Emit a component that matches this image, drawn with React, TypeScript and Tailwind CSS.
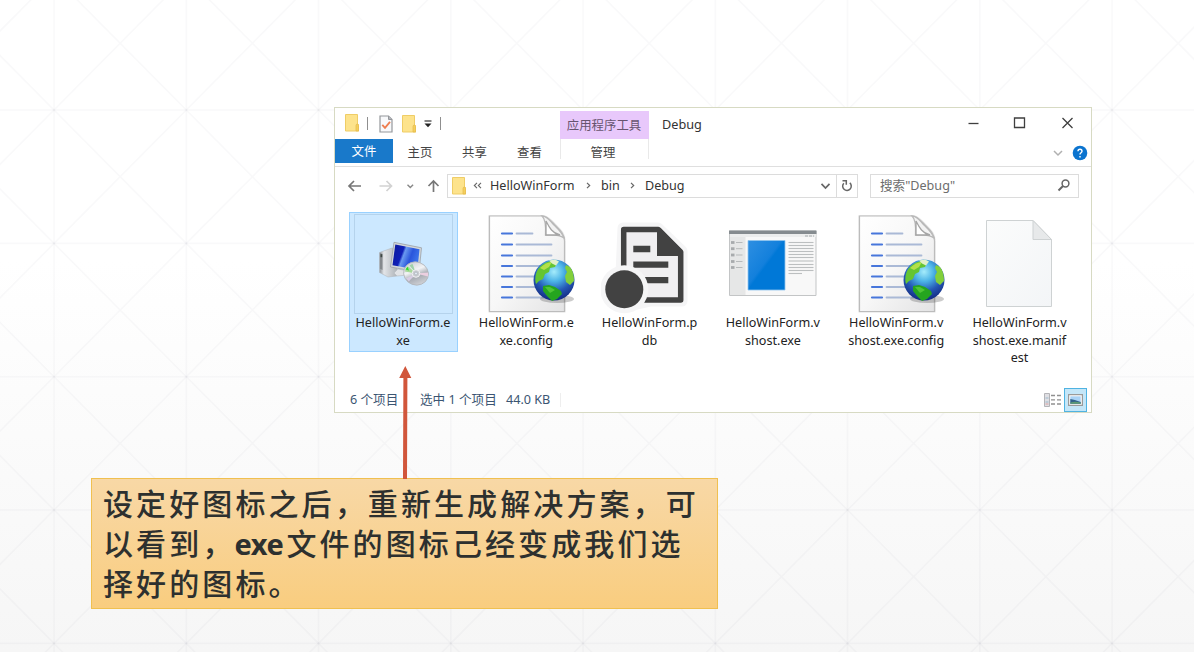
import React from "react";

const V_LINES = [-78.3, 54, 186.3, 318.5, 450.8, 583, 715.3, 847.5, 979.8, 1112, 1244.3];
const H_LINES = [-23.5, 110, 243.4, 376.7, 510, 643.4, 776.7];

function Backdrop() {
  return (
    <svg className="absolute inset-0" width="1194" height="652" viewBox="0 0 1194 652" fill="none" stroke="#6b7280" strokeOpacity="0.045" strokeWidth="1.6">
      {V_LINES.map((x) => (
        <path key={"v" + x} d={`M${x} 0V652`} />
      ))}
      {H_LINES.map((y) => (
        <path key={"h" + y} d={`M0 ${y}H1194`} />
      ))}
      {V_LINES.slice(0, -1).map((x, i) =>
        H_LINES.slice(0, -1).map((y, j) => (
          <path key={i + "-" + j} d={`M${x} ${y}L${V_LINES[i + 1]} ${H_LINES[j + 1]}M${V_LINES[i + 1]} ${y}L${x} ${H_LINES[j + 1]}`} />
        )),
      )}
    </svg>
  );
}

function Folder() {
  return (
    <svg className="shrink-0" width="14" height="18" viewBox="0 0 14 18">
      <path d="M.5.5h12v9.5l1.200 1.200V17H.5z" fill="#fde38c" stroke="#efcd66" />
      <path d="M11 17V11.500q0-1.400 1.300-1.400t1.300 1.400V17z" fill="#f5cf5c" stroke="#e4b94a" strokeWidth=".7" />
    </svg>
  );
}

function CheckDoc() {
  return (
    <svg className="shrink-0" width="14" height="18" viewBox="0 0 14 18" fill="none">
      <path d="M1 1h8.500l3.500 3.500V17H1z" fill="#f8f9fb" stroke="#94979b" strokeWidth="1.200" />
      <path d="M9.500 1v3.500H13" fill="#b5b8bc" stroke="#94979b" />
      <path d="M3.300 9.800l2.700 3 5-6" stroke="#ee7d4f" strokeWidth="1.800" />
    </svg>
  );
}

function ComputerIcon() {
  return (
    <svg width="52" height="48" viewBox="0 0 52 48">
      <defs>
        <linearGradient id="scr" x1="0" y1="0" x2="1" y2=".35">
          <stop offset="0" stopColor="#0c1a9a" />
          <stop offset=".42" stopColor="#1020b8" />
          <stop offset=".5" stopColor="#6a9af0" />
          <stop offset=".75" stopColor="#2a55dc" />
          <stop offset="1" stopColor="#3b72ea" />
        </linearGradient>
        <linearGradient id="tower" x1="0" y1="0" x2="1" y2="0">
          <stop offset="0" stopColor="#8d9298" />
          <stop offset=".25" stopColor="#e3e5e8" />
          <stop offset="1" stopColor="#aeb3b8" />
        </linearGradient>
        <linearGradient id="disc" x1="0" y1="0" x2="1" y2="1">
          <stop offset="0" stopColor="#bfc3c8" />
          <stop offset=".4" stopColor="#f2f3f5" />
          <stop offset=".6" stopColor="#a9adb4" />
          <stop offset="1" stopColor="#e6e7ea" />
        </linearGradient>
      </defs>
      <path d="M1.500 12.500L14 8l5 4v24l-9 1-8.500-4.500z" fill="url(#tower)" stroke="#b3b8be" strokeWidth=".6" />
      <path d="M1.900 13l2.600 1v16l-2.600-1.200z" fill="#85898d" />
      <path d="M2.500 14.200h1.700v3H2.500z" fill="#3d4742" />
      <path d="M20 29l10 2v4l-11 1-3-3z" fill="#e1e3e6" stroke="#b4b8bd" strokeWidth=".6" />
      <path d="M16 2.300L43.500 7.800 41 32 12.500 27z" fill="#d3d7da" stroke="#9aa0a6" strokeWidth=".8" />
      <path d="M17.300 4.400L41.500 9.300 39.400 29.800 14.500 25.300z" fill="url(#scr)" />
      <ellipse cx="38" cy="33.500" rx="12.500" ry="11.500" transform="rotate(20 38 33.500)" fill="url(#disc)" stroke="#b1b5ba" strokeWidth=".8" />
      <path d="M38 33.500L26.800 31.500a11 10 0 013.500-5z" fill="#a7d99a" />
      <path d="M38 33.500l-6.500-8 3-1.800z" fill="#9fd2a8" />
      <path d="M31 30.500l-3.500-1 2-3z" fill="#2fe02a" />
      <path d="M38 33.500l12-1v4z" fill="#eccfe0" />
      <path d="M38 33.500l-9.800 5 2.600 3z" fill="#d8cde4" />
      <circle cx="38" cy="33.500" r="3.800" fill="#c9ccd1" stroke="#f1f1f3" />
      <circle cx="38" cy="33.500" r="1.500" fill="#e2eaf2" stroke="#a5a9b0" strokeWidth=".6" />
    </svg>
  );
}

const CONFIG_ROWS = [17.5, 28.5, 39.5, 50, 60.5, 71, 81.5];

function ConfigIcon({ id }: { id: string }) {
  const page = id + "-page";
  const ocean = id + "-ocean";
  return (
    <svg className="mt-px" width="98" height="100" viewBox="0 0 98 100">
      <defs>
        <linearGradient id={page} x1="0" y1="0" x2="1" y2="1">
          <stop offset="0" stopColor="#ffffff" />
          <stop offset=".5" stopColor="#f7f7f7" />
          <stop offset="1" stopColor="#e3e3e4" />
        </linearGradient>
        <radialGradient id={ocean} cx=".5" cy=".3" r=".68">
          <stop offset="0" stopColor="#a5ecfb" />
          <stop offset=".35" stopColor="#4bb3e6" />
          <stop offset=".7" stopColor="#2456b4" />
          <stop offset="1" stopColor="#142f86" />
        </radialGradient>
      </defs>
      <path d="M11.500 1H64C70 1 74 7 78 11s8.500 8 8.500 15V96.500H11.500z" fill="none" stroke="#dcdcdc" strokeWidth="2.600" strokeLinejoin="round" strokeOpacity=".6" />
      <path d="M11.500 1H64C70 1 74 7 78 11s8.500 8 8.500 15V96.500H11.500z" fill={`url(#${page})`} stroke="#bcbcbc" strokeWidth="1.200" strokeLinejoin="round" />
      <path d="M64 1c3.500 3 4 10 3.500 19 8-.5 14-.5 18.500 3C84 17 80 14 76 10S70 1 64 1z" fill="#f3f3f3" stroke="#b9b9b9" strokeWidth="1.300" />
      <path d="M68 6v14h14c-4-1-6-2-8.500-5S69.500 9 68 6z" fill="#fff" stroke="#a5a5a5" strokeWidth="1.300" />
      {CONFIG_ROWS.map((y, i) => (
        <g key={y} strokeLinecap="round" strokeWidth="2.200">
          <path d={`M24 ${y + 1}h10`} stroke="#4776db" />
          <path d={`M38.500 ${y + 1}h${i === 0 ? 16 : 35}`} stroke="#aab9d6" strokeWidth="1.800" />
        </g>
      ))}
      <ellipse cx="79" cy="84" rx="17" ry="4" fill="#333" fillOpacity=".25" />
      <circle cx="76" cy="65" r="20.500" fill={`url(#${ocean})`} />
      <path d="M58 59c2-8 9-12 16-13l5 2-2 4-5 1-1 4-4 2-2 5-4 2-3 3c-1-3-1-6 0-10z" fill="#65c532" />
      <path d="M62 53c4-4 8-6 12-6l-3 5-5 3z" fill="#b4e04a" />
      <path d="M71 45.500l6-1 4 2-3 4-4-2z" fill="#e3f0c8" />
      <path d="M88 50l4 2c3 4 4 8 4 14l-4 4-4-3-1-6 2-4-2-4z" fill="#82cf3a" />
      <path d="M65 71l6-1 6 2 6 4 1 3-5 5-5 2-5-5-4-5z" fill="#25a51f" />
      <path d="M67 72l5 0 5 3-5 3z" fill="#4fc436" />
    </svg>
  );
}

function PdbIcon() {
  return (
    <svg width="98" height="100" viewBox="0 0 98 100">
      <path d="M22 14h35L81 37v50H50L23 93 20 60z" fill="#f5f5f6" stroke="#f5f5f6" strokeWidth="11" strokeLinejoin="round" />
      <path d="M22.700 15.500h34.500L79.700 38v48H22.700z" fill="#f0eff1" stroke="#424242" strokeWidth="5.500" strokeLinejoin="round" />
      <path d="M56 14h3.500L81 36v6H56z" fill="#424242" />
      <path d="M32.300 31.700h17v6.600h-17zM32.300 47.500h35v6.300h-35zM32.300 63h35v6.300h-35z" fill="#424242" />
      <circle cx="23.300" cy="75.300" r="24" fill="#f5f5f6" />
      <circle cx="23.300" cy="75.300" r="19" fill="#424242" />
    </svg>
  );
}

function AppIcon() {
  return (
    <svg width="98" height="100" viewBox="0 0 98 100">
      <defs>
        <linearGradient id="pane" x1="0" y1="0" x2="1" y2="1">
          <stop offset="0" stopColor="#2e8fe2" />
          <stop offset=".45" stopColor="#1380dc" />
          <stop offset=".5" stopColor="#0078d7" />
          <stop offset="1" stopColor="#0078d7" />
        </linearGradient>
      </defs>
      <path d="M5.500 17h86.500v64.500H5.500z" fill="#f8f8f8" stroke="#c3c5c6" />
      <path d="M6 23h15.500v58H6z" fill="#e6e7e7" />
      <path d="M5 16.500h87.500V20H5z" fill="#858b8f" />
      <path d="M6 20h86v3H6z" fill="#eceded" />
      <path d="M81 22h9" stroke="#c9cccd" strokeWidth="2" strokeDasharray="3 1" />
      <path d="M24 26.500h37v49.500H24z" fill="url(#pane)" stroke="#8fc4ee" strokeWidth=".8" />
      {[28.5, 34.7, 41, 47.5, 53.5].map((y) => (
        <g key={y}>
          <path d={`M7 ${y}h3.500`} stroke="#a8abad" strokeWidth="2.800" />
          <path d={`M12 ${y}h6.500`} stroke="#b7babb" strokeWidth="1" />
        </g>
      ))}
      {[28.5, 31.5, 34.5, 37.5, 40.5, 43.5, 47, 50.5, 53.5, 56.5].map((y) => (
        <path key={y} d={`M64.500 ${y}h25`} stroke="#bcbfc0" strokeWidth="1.100" />
      ))}
      <path d="M64.500 59.500h13.500" stroke="#bcbfc0" strokeWidth="1.100" />
    </svg>
  );
}

function BlankIcon() {
  return (
    <svg width="98" height="100" viewBox="0 0 98 100">
      <defs>
        <linearGradient id="blank" x1="0" y1="0" x2="1" y2="1">
          <stop offset="0" stopColor="#fbfcfc" />
          <stop offset="1" stopColor="#f3f5f7" />
        </linearGradient>
      </defs>
      <path d="M15.500 6.500h46.500L80.500 25.500v67H15.500z" fill="url(#blank)" stroke="#ced2d3" />
      <path d="M62 6.500v19h18.500z" fill="#e7e9ea" stroke="#ced2d3" />
    </svg>
  );
}

const FILES = [
  { lines: ["HelloWinForm.e", "xe"], icon: <ComputerIcon />, selected: true },
  { lines: ["HelloWinForm.e", "xe.config"], icon: <ConfigIcon id="a" />, selected: false },
  { lines: ["HelloWinForm.p", "db"], icon: <PdbIcon />, selected: false },
  { lines: ["HelloWinForm.v", "shost.exe"], icon: <AppIcon />, selected: false },
  { lines: ["HelloWinForm.v", "shost.exe.config"], icon: <ConfigIcon id="b" />, selected: false },
  { lines: ["HelloWinForm.v", "shost.exe.manif", "est"], icon: <BlankIcon />, selected: false },
];

function TitleBar() {
  return (
    <div className="flex h-[31px] items-start">
      <div className="flex h-[30px] w-[225px] items-center pl-[10px]">
        <Folder />
        <div className="ml-[8px] h-[13px] w-px bg-[#8f8f8f]" />
        <div className="ml-[11px] flex pt-px">
          <CheckDoc />
        </div>
        <div className="ml-[9px] flex pt-px">
          <Folder />
        </div>
        <svg className="mt-[2px] ml-[8px]" width="8" height="8" viewBox="0 0 8 8">
          <path d="M.5 1h7" stroke="#333" strokeWidth="1.200" />
          <path d="M.5 3.500h7L4 7.300z" fill="#222" />
        </svg>
        <div className="ml-[8px] h-[13px] w-px bg-[#8f8f8f]" />
      </div>
      <div className="mt-[3px] flex h-[28px] w-[89px] items-center justify-center bg-[#e8c8fb] pt-[2px] pr-px text-[#66546f]">应用程序工具</div>
      <div className="ml-[13px] flex h-[31px] items-center text-[12.7px] text-[#333]">Debug</div>
      <svg className="mt-[7px] ml-auto mr-[16px]" width="108" height="16" viewBox="0 0 108 16" fill="none" stroke="#3f3f3f" strokeWidth="1.300">
        <path d="M1.500 8.500h10" />
        <path d="M47.500 3h10v9.500h-10z" />
        <path d="M95.500 3l10 10M105.500 3l-10 10" />
      </svg>
    </div>
  );
}

function Ribbon() {
  return (
    <div className="flex h-[28px] items-start border-b border-[#dfdfdf] text-[#444]">
      <div className="flex h-[24px] w-[58px] items-center justify-center bg-[#1979ca] pt-[2px] text-white">文件</div>
      <div className="flex h-[27px] w-[54px] items-center justify-center">主页</div>
      <div className="flex h-[27px] w-[55px] items-center justify-center">共享</div>
      <div className="flex h-[27px] w-[55px] items-center justify-center">查看</div>
      <div className="ml-[3px] flex h-[20px] w-[89px] items-center justify-center border-x border-[#e9e9e9] pt-[7px] pr-[3px]">管理</div>
      <svg className="mt-[6px] ml-auto mr-[3px]" width="36" height="16" viewBox="0 0 36 16" fill="none">
        <path d="M2 6l4 4 4-4" stroke="#b0b0b0" strokeWidth="1.500" />
        <circle cx="28" cy="8" r="7.300" fill="#0b74cf" />
        <path d="M26 6.300a2 2 0 114 0c0 1.500-2 1.500-2 3.200M28 11v1.500" stroke="#fff" strokeWidth="1.400" />
      </svg>
    </div>
  );
}

function Chevron() {
  return (
    <svg width="5" height="7" viewBox="0 0 5 7" fill="none">
      <path d="M1 .8l2.700 2.700L1 6.200" stroke="#666" strokeWidth="1.200" />
    </svg>
  );
}

function AddressRow() {
  return (
    <div className="flex h-[38px] items-center pb-px text-[12.600px] text-[#333]">
      <svg className="shrink-0" width="112" height="16" viewBox="0 0 112 16" fill="none" strokeWidth="1.700">
        <path d="M26 8H14M19 3L14 8l5 5" stroke="#777" />
        <path d="M44.500 8H56.500M51.500 3l5 5-5 5" stroke="#d2d2d2" />
        <path d="M72.500 6.800l2.800 2.800 2.800-2.800" stroke="#888" strokeWidth="1.400" />
        <path d="M98.500 14V3M93.500 8l5-5 5 5" stroke="#777" />
      </svg>
      <div className="flex h-[24px] w-[411px] shrink-0 items-center border border-[#dcdcdc] pl-[4px]">
        <Folder />
        <svg className="ml-[7px]" width="9" height="7" viewBox="0 0 9 7" fill="none" stroke="#666" strokeWidth="1.100">
          <path d="M4 .8L1.300 3.500 4 6.200M8 .8L5.300 3.500 8 6.200" />
        </svg>
        <span className="ml-[8px] w-[85px] whitespace-nowrap">HelloWinForm</span>
        <div className="ml-[11px] flex">
          <Chevron />
        </div>
        <span className="ml-[10px] w-[19px]">bin</span>
        <div className="ml-[10px] flex">
          <Chevron />
        </div>
        <span className="ml-[10px]">Debug</span>
        <svg className="ml-auto mr-[5px]" width="11" height="8" viewBox="0 0 11 8" fill="none">
          <path d="M1.500 1.800L5.500 6l4-4.200" stroke="#666" strokeWidth="1.700" />
        </svg>
        <div className="flex h-[22px] w-[21px] items-center justify-center border-l border-[#dcdcdc]">
          <svg width="12" height="13" viewBox="0 0 12 13" fill="none" stroke="#666" strokeWidth="1.500">
            <path d="M8.800 3.900A4.300 4.300 0 112.800 4.200" />
            <path d="M1.500 1.800h3.800v4" />
          </svg>
        </div>
      </div>
      <div className="ml-[12px] flex h-[24px] w-[209px] shrink-0 items-center border border-[#dcdcdc] pr-[7px] pl-[9px] text-[#6d6d6d]">
        <span>搜索"Debug"</span>
        <svg className="ml-auto" width="14" height="13" viewBox="0 0 14 13" fill="none" stroke="#666" strokeWidth="1.500">
          <circle cx="8.500" cy="4.500" r="3.400" />
          <path d="M6 7L1.500 11.500" strokeWidth="1.900" />
        </svg>
      </div>
    </div>
  );
}

function FileGrid() {
  return (
    <div className="flex h-[183px] gap-[14.300px] pt-[7px] pl-[14px]">
      {FILES.map((f, i) => (
        <div
          key={i}
          className={
            f.selected
              ? "flex h-[140px] w-[109px] shrink-0 flex-col items-center border border-[#99d1ff] bg-[#cce8ff]"
              : "flex h-[140px] w-[109px] shrink-0 flex-col items-center border border-transparent"
          }
        >
          <div
            className={
              f.selected
                ? "mt-px flex h-[100px] w-[99px] items-center justify-center border border-[#b5d3ec]"
                : "mt-px flex h-[100px] w-[99px] items-center justify-center"
            }
          >
            {f.icon}
          </div>
          <div className="pr-px text-center text-[12.600px] leading-[17.700px] whitespace-nowrap text-[#222]">
            {f.lines.map((l) => (
              <div key={l}>{l}</div>
            ))}
          </div>
        </div>
      ))}
    </div>
  );
}

function StatusBar() {
  return (
    <div className="flex h-[24px] items-center pl-[15px] text-[12.600px] text-[#3b5572]">
      <span className="w-[70px] whitespace-nowrap">6 个项目</span>
      <span className="w-[86px] whitespace-nowrap">选中 1 个项目</span>
      <span className="whitespace-nowrap">44.0 KB</span>
      <div className="ml-[10px] h-[14px] w-px bg-[#eeeeee]" />
      <svg className="ml-auto" width="20" height="16" viewBox="0 0 20 16">
        <path d="M1.500 1.500h5v13h-5z" fill="#dfdfe3" stroke="#b4b4b8" />
        <path d="M2.500 6h3M2.500 10h3" stroke="#9bb8cc" />
        <path d="M2.500 12h3" stroke="#d9a0a0" />
        <path d="M8 3.500h4M14 3.500h4M8 7.800h4M14 7.800h4M8 12h4M14 12h4" stroke="#909090" strokeWidth="1.300" />
      </svg>
      <div className="ml-px mr-[4px] flex h-[24px] w-[23px] items-center justify-center border border-[#4fb3e2] bg-[#c4e6f8]">
        <svg width="15" height="12" viewBox="0 0 15 12">
          <path d="M.6.6h13.800v10.800H.6z" fill="#fff" stroke="#9a9a9a" strokeWidth="1.200" />
          <path d="M2.300 2.300h10.400v7.400H2.300z" fill="#a9d2f5" />
          <path d="M2.300 5q4 .5 10.400 3v1.700H2.300z" fill="#33628b" />
          <path d="M2.300 8.500q5-1.500 10.400 0v1.200H2.300z" fill="#5c9a72" />
        </svg>
      </div>
    </div>
  );
}

export default function App() {
  return (
    <main className="relative h-[652px] w-[1194px] overflow-hidden bg-linear-to-b from-white from-40% to-[#f6f6f6] pt-[107px] [font-family:'Noto_Sans','Noto_Sans_CJK_SC',sans-serif]">
      <Backdrop />
      <section className="relative ml-[334px] h-[306px] w-[758px] border border-[#d7dac3] bg-white text-[12.400px] leading-[18px]">
        <TitleBar />
        <Ribbon />
        <AddressRow />
        <FileGrid />
        <StatusBar />
      </section>
      <section className="relative mt-[65px] ml-[91px] h-[131px] w-[627px] border border-[#f0c050] bg-linear-to-b from-[#f8d8a6] to-[#f9cd7f] pt-[5px] pl-[11px] text-[30px] leading-[40px] font-medium tracking-[3.100px] whitespace-nowrap text-[#2d302f]">
        <div>设定好图标之后，重新生成解决方案，可</div>
        <div>
          以看到，
          <span className="-ml-px inline-block w-[52px] text-[29px] leading-[30px] font-bold tracking-[-0.400px]">exe</span>
          文件的图标己经变成我们选
        </div>
        <div>择好的图标。</div>
      </section>
      <svg className="absolute top-[366px] left-[398px]" width="14" height="113" viewBox="0 0 14 113">
        <path d="M7.300 0l6 12H9.400L9 113H5L5.400 12H1.200z" fill="#d1563b" />
      </svg>
    </main>
  );
}
